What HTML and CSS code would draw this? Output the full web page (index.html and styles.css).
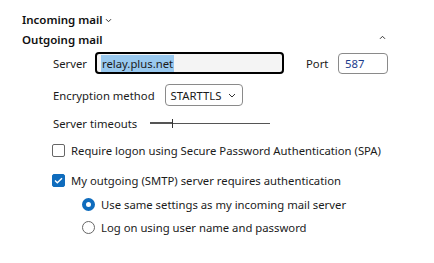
FILE: index.html
```html
<!DOCTYPE html>
<html lang="en">

<head>
    <meta charset="UTF-8">
    <meta name="viewport" content="width=device-width, initial-scale=1.0">
    <link rel="stylesheet" href="styles.css">
    <title>Outgoing mail</title>
</head>

<body>
    <div class="panel">
        <div class="section-title">
            <span>Incoming mail</span>
            <svg class="chev" width="7" height="5" viewBox="0 0 7 5">
                <path d="M1 1.2 L3.5 3.7 L6 1.2" fill="none" stroke="#333" stroke-width="1"/>
            </svg>
        </div>
        <div class="section-title outgoing">
            <span>Outgoing mail</span>
            <svg class="caret" width="7" height="5" viewBox="0 0 7 5">
                <path d="M1 3.8 L3.5 1.3 L6 3.8" fill="none" stroke="#333" stroke-width="1"/>
            </svg>
        </div>

        <div class="row server-row">
            <label class="field-label server-label">Server</label>
            <div class="text-box focused"><span class="selected">relay.plus.net</span></div>
            <label class="field-label port-label">Port</label>
            <div class="text-box port">587</div>
        </div>

        <div class="row enc-row">
            <label class="field-label">Encryption method</label>
            <div class="dropdown">
                <span>STARTTLS</span>
                <svg width="8" height="5" viewBox="0 0 8 5">
                    <path d="M1 1 L4 4 L7 1" fill="none" stroke="#333" stroke-width="1"/>
                </svg>
            </div>
        </div>

        <div class="row timeout-row">
            <label class="field-label timeout-label">Server timeouts</label>
            <div class="slider">
                <div class="slider-fill"></div>
                <div class="slider-thumb"></div>
                <div class="slider-rest"></div>
            </div>
        </div>

        <div class="check-row spa-row">
            <span class="check-box"></span>
            <span>Require logon using Secure Password Authentication (SPA)</span>
        </div>

        <div class="check-row auth-row">
            <span class="check-box checked">
                <svg width="9" height="7" viewBox="0 0 9 7">
                    <path d="M1 3.6 L3.3 5.8 L8 1.2" fill="none" stroke="#fff" stroke-width="1.4"/>
                </svg>
            </span>
            <span>My outgoing (SMTP) server requires authentication</span>
        </div>

        <div class="radio-row first">
            <span class="radio on"></span>
            <span>Use same settings as my incoming mail server</span>
        </div>
        <div class="radio-row">
            <span class="radio"></span>
            <span>Log on using user name and password</span>
        </div>
    </div>
</body>

</html>
```

FILE: styles.css
```css
body {
    margin: 0;
    font-family: "Noto Sans", sans-serif;
    font-size: 11.3px;
    color: #1b1b1b;
    background: #fff;
}

.panel {
    padding: 9px 0 0 22px;
    width: 368px;
}

.section-title {
    display: flex;
    align-items: center;
    height: 20px;
    font-weight: 600;
    font-size: 11.5px;
    color: #111;
}

.section-title .chev {
    margin-left: 2px;
    margin-top: 2px;
}

.section-title.outgoing {
    justify-content: space-between;
}

.section-title .caret {
    margin-right: 4px;
    margin-top: -4px;
}

.row {
    display: flex;
    align-items: center;
    padding-left: 31px;
}

.field-label {
    color: #1b1b1b;
}

.server-label {
    width: 42px;
}

.server-row {
    margin-top: 3px;
    height: 22px;
}

.text-box {
    box-sizing: border-box;
    height: 22px;
    border: 1px solid #8a8a8a;
    border-radius: 4px;
    padding: 0 6px;
    display: flex;
    align-items: center;
    background: #fff;
}

.text-box.focused {
    width: 189px;
    border: 2px solid #000;
    background: #f4f4f4;
    padding-left: 4px;
}

.selected {
    background: #99c9ef;
    padding: 1px 1px;
}

.port-label {
    width: 32px;
    margin-left: 22px;
}

.text-box.port {
    width: 50px;
    height: 21px;
    color: #1c3c8c;
}

.enc-row {
    margin-top: 10px;
    height: 22px;
}

.dropdown {
    box-sizing: border-box;
    width: 78px;
    height: 22px;
    margin-left: 10px;
    border: 1px solid #8a8a8a;
    border-radius: 4px;
    display: flex;
    align-items: center;
    justify-content: space-between;
    padding: 0 6px 0 5px;
}

.timeout-row {
    margin-top: 6px;
    height: 22px;
}

.timeout-label {
    width: 97px;
}

.slider {
    display: flex;
    align-items: center;
    height: 12px;
}

.slider-fill {
    width: 22px;
    height: 2px;
    background: #555;
}

.slider-thumb {
    width: 1px;
    height: 9px;
    background: #333;
}

.slider-rest {
    width: 97px;
    height: 1px;
    background: #555;
}

.check-row {
    display: flex;
    align-items: center;
    gap: 6px;
    padding-left: 30px;
    height: 22px;
}

.spa-row {
    margin-top: 5px;
}

.auth-row {
    margin-top: 8px;
}

.check-box {
    box-sizing: border-box;
    width: 13px;
    height: 13px;
    border: 1px solid #666;
    border-radius: 2px;
    display: flex;
    align-items: center;
    justify-content: center;
}

.check-box.checked {
    background: #0f6cbd;
    border-color: #0f6cbd;
}

.radio-row {
    display: flex;
    align-items: center;
    gap: 6px;
    padding-left: 60px;
    height: 23px;
}

.radio-row.first {
    margin-top: 2px;
}

.radio {
    box-sizing: border-box;
    width: 13px;
    height: 13px;
    border: 1px solid #666;
    border-radius: 50%;
}

.radio.on {
    border: 4px solid #0f6cbd;
}
```
